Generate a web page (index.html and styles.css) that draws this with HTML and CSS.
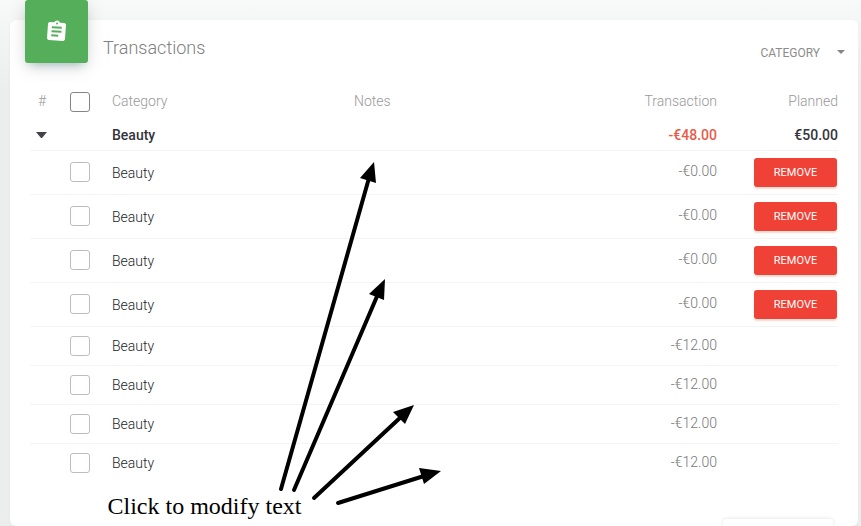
FILE: index.html
```html
<!DOCTYPE html>
<html lang="en">
<head>
<meta charset="utf-8">
<title>Transactions</title>
<link rel="stylesheet" href="styles.css">
</head>
<body>
<main class="card">
  <header class="card-header">
    <div class="card-icon">
      <svg class="clipboard" viewBox="0 0 24 24" width="24" height="24"><path fill="#fff" d="M19 3h-4.180C14.400 1.840 13.300 1 12 1s-2.400.840-2.820 2H5c-1.100 0-2 .900-2 2v14c0 1.100.900 2 2 2h14c1.100 0 2-.900 2-2V5c0-1.100-.900-2-2-2zm-7 0c.550 0 1 .450 1 1s-.450 1-1 1-1-.450-1-1 .450-1 1-1zm2 14H7v-2h7v2zm3-4H7v-2h10v2zm0-4H7V7h10v2z"/></svg>
    </div>
    <h1 class="title">Transactions</h1>
    <div class="picker"><span>CATEGORY</span><i class="caret"></i></div>
  </header>
  <section class="table">
    <div class="row head"><span class="hash">#</span><i class="check"></i><span>Category</span><span class="notes">Notes</span><span class="amount">Transaction</span><span class="planned">Planned</span></div>
    <div class="row group"><i class="toggle"></i><b class="name">Beauty</b><b class="amount">-€48.00</b><b class="planned">€50.00</b></div>
    <div class="row tall"><i class="check"></i><span class="name">Beauty</span><span class="amount">-€0.00</span><button class="remove">REMOVE</button></div>
    <div class="row tall"><i class="check"></i><span class="name">Beauty</span><span class="amount">-€0.00</span><button class="remove">REMOVE</button></div>
    <div class="row tall"><i class="check"></i><span class="name">Beauty</span><span class="amount">-€0.00</span><button class="remove">REMOVE</button></div>
    <div class="row tall"><i class="check"></i><span class="name">Beauty</span><span class="amount">-€0.00</span><button class="remove">REMOVE</button></div>
    <div class="row"><i class="check"></i><span class="name">Beauty</span><span class="amount">-€12.00</span></div>
    <div class="row"><i class="check"></i><span class="name">Beauty</span><span class="amount">-€12.00</span></div>
    <div class="row"><i class="check"></i><span class="name">Beauty</span><span class="amount">-€12.00</span></div>
    <div class="row last"><i class="check"></i><span class="name">Beauty</span><span class="amount">-€12.00</span></div>
  </section>
  <div class="pager"></div>
</main>
<svg class="arrows" viewBox="0 0 861 526" width="861" height="526">
  <g stroke="#000" stroke-width="4" stroke-linecap="round">
    <path d="M281 489L369 178"/>
    <path d="M294 490L378 294"/>
    <path d="M314 498L402 416"/>
    <path d="M338 503L424 476"/>
  </g>
  <path d="M374 162L376 183L360 178Z"/>
  <path d="M385 279L384 300L369 294Z"/>
  <path d="M414 405L405 424L393 412Z"/>
  <path d="M441 471L424 484L419 468Z"/>
</svg>
<div class="note">Click to modify text</div>
</body>
</html>
```
FILE: styles.css
```css
* { box-sizing: border-box; }
body {
  margin: 0;
  width: 861px;
  height: 526px;
  overflow: hidden;
  padding: 20px 3px 0 10px;
  background: linear-gradient(#f8faf9 0, #f5f6f6 20px, #eceeed 90px);
  font: 300 14px/20px Roboto, sans-serif;
  color: #212529;
}
.card {
  height: 506px;
  padding: 0 20px;
  border-radius: 6px;
  background: #fff;
  box-shadow: 0 1px 4px rgba(0, 0, 0, .03);
  display: flex;
  flex-direction: column;
}
.card-header { flex: none; height: 60px; display: flex; }
.card-icon {
  width: 63px;
  height: 63px;
  margin: -20px 15px 0 -5px;
  border-radius: 3px;
  background: #55ae59;
  box-shadow: 0 4px 18px rgba(0, 0, 0, .13), 0 6px 9px -5px rgba(60, 120, 130, .4);
  display: flex;
  align-items: center;
  justify-content: center;
}
.clipboard { transform: translate(-.5px, -.5px) rotate(4deg); }
.title { margin: 16px 0 0; font-size: 18px; line-height: 24px; font-weight: 300; color: #808080; }
.picker {
  margin: 23px -7px 0 auto;
  display: flex;
  align-items: center;
  gap: 17px;
  height: 20px;
  font-size: 12px;
  font-weight: 400;
  color: #8c8c8c;
}
.caret { border: solid transparent; border-width: 4px 4px 0; border-top-color: #858585; margin-top: -2px; }
.table { flex: none; }
.row {
  display: grid;
  grid-template-columns: 40px 42px 242px 200px 163px 121px;
  align-items: center;
  height: 39px;
  border-bottom: 1px solid #f4f4f4;
}
.tall { height: 44px; }
.last { border-bottom: 0; height: 38px; }
.head { height: 39px; border: 0; color: #999; padding-top: 2px; }
.hash { padding-left: 8px; }
.group { height: 32px; }
.check { grid-column: 2; width: 20px; height: 20px; border: 1px solid #c3bbbb; border-radius: 3px; }
.tall .check { margin-bottom: 1px; }
.head .check { border-color: #858585; margin-top: 2px; }
.toggle { margin-left: 6px; border: solid transparent; border-width: 6px 5.500px 0; border-top-color: #42424a; width: 11px; }
.name { grid-column: 3; }
.tall .name { padding-top: 1px; }
.group .name, .group b { font-weight: 500; padding-top: 0; color: #34343c; }
.amount { grid-column: 5; text-align: right; color: #777; }
.row > .amount { padding-bottom: 2px; }
.tall > .amount { padding-bottom: 3px; }
.head > .amount { padding-bottom: 0; color: #999; }
.group > b.amount { color: #ea5a49; padding-bottom: 0; }
.planned { grid-column: 6; text-align: right; }
.remove {
  grid-column: 6;
  justify-self: end;
  width: 83px;
  height: 29px;
  margin-right: 1px;
  padding: 0;
  border: 0;
  border-radius: 3px;
  background: #ef4135;
  color: #fff;
  font: 400 11px/29px Roboto, sans-serif;
  box-shadow: 0 2px 2px rgba(150, 90, 50, .22);
}
.pager { flex: none; width: 110px; height: 8px; margin: 37px 5px 0 auto; border-radius: 3px; background: #fff; box-shadow: 0 0 4px rgba(0, 0, 0, .13); }
.arrows { position: absolute; left: 0; top: 0; }
.note { position: absolute; left: 107.500px; top: 492px; font: 24px/28px "Liberation Serif", serif; color: #000; white-space: nowrap; }
```
